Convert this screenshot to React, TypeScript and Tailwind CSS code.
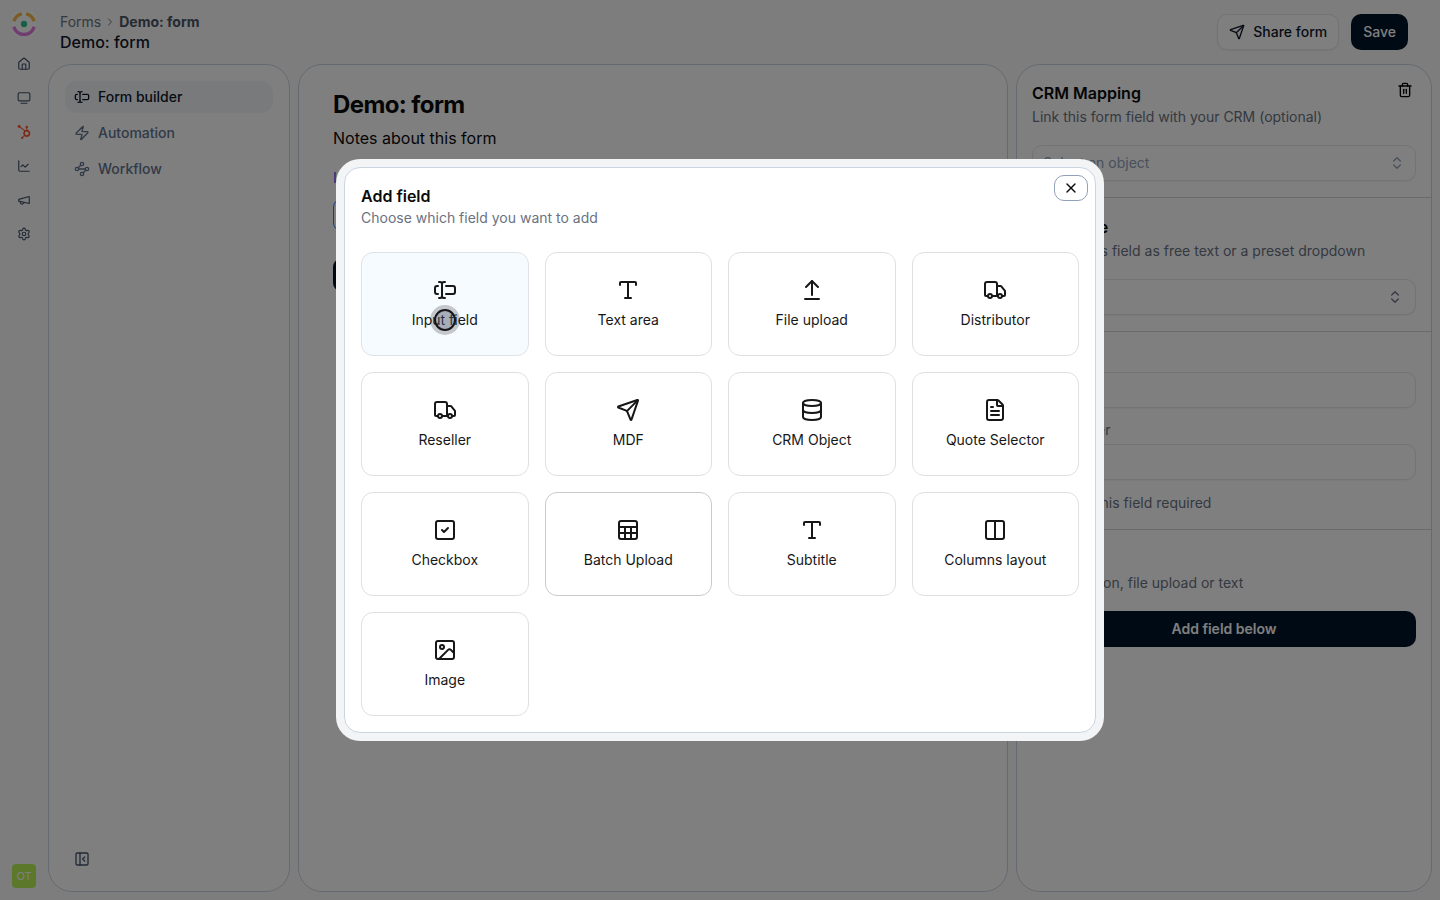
import { useId } from "react";
import type { ComponentType, ReactNode } from "react";
import {
  ArrowUpFromLine,
  ChartLine,
  ChevronRight,
  ChevronsUpDown,
  Columns2,
  Database,
  FileText,
  House,
  Image,
  PanelLeftClose,
  Send,
  Settings,
  SquareCheck,
  TextCursorInput,
  Trash2,
  Truck,
  TvMinimal,
  Type,
  Waypoints,
  X,
  Zap,
} from "lucide-react";
import { FaHubspot } from "react-icons/fa";

type Icon = ComponentType<{ size?: number | string }>;
type Field = { label: string; icon: Icon; className?: string };

function Outline({ size = 24, children }: { size?: number | string; children: ReactNode }) {
  return (
    <svg
      width={size}
      height={size}
      viewBox="0 0 24 24"
      fill="none"
      stroke="currentColor"
      strokeWidth="2"
      strokeLinecap="round"
      strokeLinejoin="round"
      aria-hidden="true"
    >
      {children}
    </svg>
  );
}

function SheetIcon({ size }: { size?: number | string }) {
  return (
    <Outline size={size}>
      <rect x="3" y="3" width="18" height="18" rx="2" />
      <path d="M3 9h18M3 15h18M9 9v12M15 9v12" />
    </Outline>
  );
}

function MegaphoneIcon({ size }: { size?: number | string }) {
  return (
    <Outline size={size}>
      <path d="m3 11 18-5v12L3 14v-3z" />
      <path d="M11.6 16.8a3 3 0 1 1-5.8-1.6" />
    </Outline>
  );
}

const fields: Field[] = [
  { label: "Input field", icon: TextCursorInput, className: "border-[#dfe2e6] bg-[#f6fbff]" },
  { label: "Text area", icon: Type },
  { label: "File upload", icon: ArrowUpFromLine },
  { label: "Distributor", icon: Truck },
  { label: "Reseller", icon: Truck },
  { label: "MDF", icon: Send },
  { label: "CRM Object", icon: Database },
  { label: "Quote Selector", icon: FileText },
  { label: "Checkbox", icon: SquareCheck },
  { label: "Batch Upload", icon: SheetIcon, className: "border-[#c8cacd] bg-white" },
  { label: "Subtitle", icon: Type },
  { label: "Columns layout", icon: Columns2 },
  { label: "Image", icon: Image },
];

function Logo() {
  return (
    <svg viewBox="0 0 24 24" className="size-6" fill="none" strokeWidth="3.4" aria-hidden="true">
      <rect width="24" height="24" rx="6" fill="#fff" />
      <path d="M2 9.2A10.4 10.4 0 0 1 9.8 1.9" stroke="#f5b94a" />
      <path d="M14.2 1.9A10.4 10.4 0 0 1 22 9.2" stroke="#f5b94a" />
      <path d="M1.8 14.8a10.6 10.6 0 0 0 20.4 0" stroke="#e07be0" />
      <circle cx="12" cy="12" r="3.2" fill="#2fbf8a" />
    </svg>
  );
}

function Rail() {
  const link = "flex size-6 items-center justify-center text-slate-600";
  return (
    <nav aria-label="Main" className="flex w-12 shrink-0 flex-col items-center py-3">
      <a href="#" aria-label="Dashboard"><Logo /></a>
      <div className="mt-4 flex flex-col gap-[10px]">
        <a href="#" aria-label="Home" className={link}><House size={14} /></a>
        <a href="#" aria-label="Portal" className={link}><TvMinimal size={14} /></a>
        <a href="#" aria-label="HubSpot" className={link}><FaHubspot size={14} className="text-[#f8532b]" /></a>
        <a href="#" aria-label="Reports" className={link}><ChartLine size={14} /></a>
        <a href="#" aria-label="Campaigns" className={link}><MegaphoneIcon size={14} /></a>
        <a href="#" aria-label="Settings" className={link}><Settings size={14} /></a>
      </div>
      <button aria-label="Account" className="mt-auto size-6 rounded bg-[#b6f056] text-[11px] text-white">OT</button>
    </nav>
  );
}

function NavItem({ icon: Icon, label, active }: { icon: Icon; label: string; active?: boolean }) {
  return (
    <a
      href="#"
      className={
        active
          ? "flex h-8 items-center gap-2 rounded-xl bg-slate-100 px-[9px] text-sm font-medium text-slate-900"
          : "flex h-8 items-center gap-2 rounded-xl px-[9px] text-sm font-medium text-slate-500"
      }
    >
      <Icon size={16} />
      {label}
    </a>
  );
}

function Panel({ className, children }: { className: string; children: ReactNode }) {
  return <section className={`rounded-3xl border border-slate-300 bg-white ${className}`}>{children}</section>;
}

const control =
  "h-9 w-full appearance-none rounded-[10px] border border-gray-200 bg-white px-[10px] text-sm shadow-xs";

function SelectBox({ label, value, muted }: { label: string; value: string; muted?: boolean }) {
  return (
    <div className="relative">
      <select
        aria-label={label}
        className={muted ? `${control} text-slate-400` : `${control} text-gray-900`}
      >
        <option>{value}</option>
      </select>
      <ChevronsUpDown
        size={16}
        className={
          muted
            ? "pointer-events-none absolute top-[10px] right-[11px] text-slate-400"
            : "pointer-events-none absolute top-[10px] right-[13px] text-gray-500"
        }
      />
    </div>
  );
}

function TextBox({ label }: { label: string }) {
  const id = useId();
  return (
    <div>
      <label htmlFor={id} className="block text-sm leading-5 text-gray-500">{label}</label>
      <input id={id} className={`${control} mt-1`} />
    </div>
  );
}

function SettingsPanel() {
  return (
    <Panel className="w-[416px] shrink-0">
      <div className="border-b border-gray-300 px-[15px] py-4">
        <div className="flex items-start justify-between">
          <h2 className="text-base font-semibold text-neutral-950">CRM Mapping</h2>
          <button aria-label="Delete field" className="mt-[1px] mr-[3px]"><Trash2 size={16} /></button>
        </div>
        <p className="mb-4 text-sm leading-6 text-gray-500">Link this form field with your CRM (optional)</p>
        <SelectBox label="CRM object" value="Select an object" muted />
      </div>
      <div className="border-b border-gray-300 px-[15px] pt-[17px] pb-4">
        <h2 className="text-base font-semibold text-neutral-950">Field type</h2>
        <p className="mb-4 text-sm leading-6 text-gray-500">Display this field as free text or a preset dropdown</p>
        <SelectBox label="Field type" value="Text" />
      </div>
      <div className="border-b border-gray-300 px-[15px] py-4">
        <TextBox label="Label" />
        <div className="mt-3"><TextBox label="Placeholder" /></div>
        <label className="mt-[13px] flex h-5 items-center gap-2 text-sm text-gray-500">
          <input type="checkbox" className="size-4" />
          Make this field required
        </label>
      </div>
      <div className="px-[15px] pt-[17px]">
        <h2 className="text-base font-semibold text-neutral-950">Add field</h2>
        <p className="mb-4 text-sm leading-6 text-gray-500">Add question, file upload or text</p>
        <button className="h-9 w-full rounded-[10px] bg-[#001529] text-sm font-semibold text-white">Add field below</button>
      </div>
    </Panel>
  );
}

function Builder() {
  return (
    <div className="flex h-screen bg-[#fafafa]">
      <Rail />
      <div className="flex min-w-0 grow flex-col pr-2 pb-2">
        <header className="flex h-16 items-center justify-between pr-6 pl-3">
          <div>
            <nav aria-label="Breadcrumb" className="flex items-center gap-[3px] text-sm leading-5 text-gray-500">
              <a href="#">Forms</a>
              <ChevronRight size={12} />
              <span className="font-bold text-gray-600">Demo: form</span>
            </nav>
            <h1 className="text-base leading-5 font-medium text-slate-900">Demo: form</h1>
          </div>
          <div className="flex gap-3">
            <button className="flex h-9 items-center gap-2 rounded-[10px] border border-gray-200 bg-white px-[11px] text-sm font-medium text-slate-900 shadow-xs">
              <Send size={16} />
              Share form
            </button>
            <button className="h-9 rounded-[10px] bg-[#001529] px-3 text-sm font-medium text-white">Save</button>
          </div>
        </header>
        <div className="flex min-h-0 grow gap-2">
          <Panel className="flex w-[242px] shrink-0 flex-col p-4">
            <nav aria-label="Form" className="flex flex-col gap-1">
              <NavItem icon={TextCursorInput} label="Form builder" active />
              <NavItem icon={Zap} label="Automation" />
              <NavItem icon={Waypoints} label="Workflow" />
            </nav>
            <button aria-label="Collapse panel" className="mt-auto mb-2 ml-[9px] w-4 text-slate-600">
              <PanelLeftClose size={16} />
            </button>
          </Panel>
          <Panel className="min-w-0 grow px-[34px] pt-6">
            <h2 className="text-2xl leading-8 font-bold tracking-tight text-neutral-950">Demo: form</h2>
            <p className="mt-[5px] text-base leading-6 text-neutral-950">Notes about this form</p>
            <label htmlFor="entry" className="mt-[18px] block text-sm leading-5 font-medium text-indigo-500">Input field</label>
            <input id="entry" className="mt-[11px] h-8 w-full rounded-lg border border-blue-500" />
            <button className="mt-7 h-8 rounded-lg bg-[#001529] px-4 text-sm font-medium text-white">Submit</button>
          </Panel>
          <SettingsPanel />
        </div>
      </div>
    </div>
  );
}

function FieldDialog() {
  return (
    <div className="fixed inset-0 flex items-center justify-center bg-black/50">
      <div role="dialog" aria-modal="true" aria-labelledby="dialog-title" className="w-full max-w-3xl rounded-3xl bg-gray-100 p-2">
        <div className="relative rounded-2xl border border-slate-300 bg-white p-4">
          <h2 id="dialog-title" className="text-base leading-6 font-semibold text-neutral-950">Add field</h2>
          <p className="text-sm leading-5 text-gray-500">Choose which field you want to add</p>
          <button
            aria-label="Close"
            className="absolute top-[7px] right-[7px] flex h-[26px] w-[34px] items-center justify-center rounded-[10px] border border-slate-400 bg-white text-neutral-950"
          >
            <X size={16} />
          </button>
          <div className="mt-6 grid grid-cols-4 gap-4">
            {fields.map(({ label, icon: Icon, className }) => (
              <button
                key={label}
                className={`relative flex h-26 flex-col items-center justify-center gap-2 rounded-xl border text-sm leading-5 text-neutral-900 ${className ?? "border-[#dfe0e4] bg-white"}`}
              >
                <Icon size={24} />
                {label}
                {label === "Input field" && (
                  <span className="absolute top-[52px] flex size-[30px] items-center justify-center rounded-full bg-black/20">
                    <span className="size-[22px] rounded-full border-2 border-neutral-900 bg-slate-500/30" />
                  </span>
                )}
              </button>
            ))}
          </div>
        </div>
      </div>
    </div>
  );
}

export default function App() {
  return (
    <div className="font-['Inter',sans-serif]">
      <Builder />
      <FieldDialog />
    </div>
  );
}
